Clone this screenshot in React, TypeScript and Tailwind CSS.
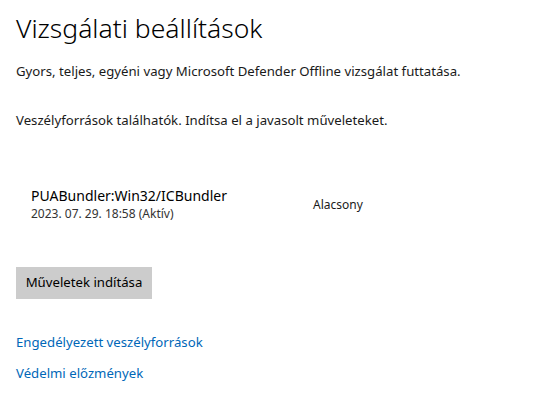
export default function App() {
  return (
    <div
      className="w-[546px] h-[408px] bg-white text-black overflow-hidden"
      style={{ fontFamily: '"Segoe UI", "Noto Sans", "Open Sans", sans-serif' }}
    >
      <div className="pl-4 pt-[10px]">
        <h1 className="text-[26.5px] font-light leading-[36px] text-black">Vizsgálati beállítások</h1>
        <p className="mt-[15px] text-[13.2px] leading-[20px] text-[#1a1a1a]">
          Gyors, teljes, egyéni vagy Microsoft Defender Offline vizsgálat futtatása.
        </p>
        <p className="mt-[29px] text-[13.2px] leading-[20px] text-[#1a1a1a]">
          Veszélyforrások találhatók. Indítsa el a javasolt műveleteket.
        </p>
        <div className="mt-[56px] flex items-center pl-[15px]">
          <div className="w-[282px]">
            <div className="text-[14px] leading-[19px] text-black">PUABundler:Win32/ICBundler</div>
            <div className="text-[12px] leading-[18px] text-[#333]">2023. 07. 29. 18:58 (Aktív)</div>
          </div>
          <div className="text-[12px] text-[#1a1a1a]">Alacsony</div>
        </div>
        <button className="mt-[44px] h-[32px] w-[136px] bg-[#cccccc] text-[13.2px] text-black text-center">
          Műveletek indítása
        </button>
        <div className="mt-[33px] text-[13.2px] leading-[20px] text-[#0067b8]">Engedélyezett veszélyforrások</div>
        <div className="mt-[11px] text-[13.2px] leading-[20px] text-[#0067b8]">Védelmi előzmények</div>
      </div>
    </div>
  );
}
